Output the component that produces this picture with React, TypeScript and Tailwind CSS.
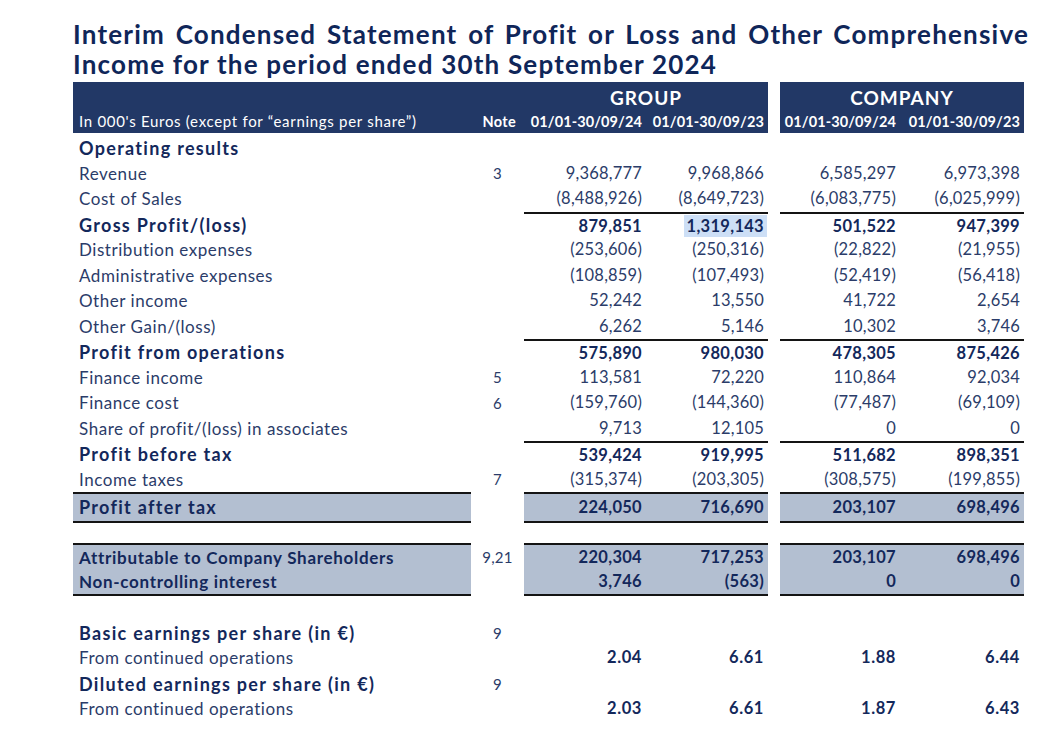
import React from "react";

type Row = {
  label?: string;
  note?: string;
  values?: string[];
  bold?: boolean;
  big?: boolean;
  lineTop?: boolean;
  shaded?: "box" | "top" | "bottom";
  numBold?: boolean;
  highlight?: number;
  spacer?: boolean;
};

const rows: Row[] = [
  { label: "Operating results", bold: true, big: true },
  { label: "Revenue", note: "3", values: ["9,368,777", "9,968,866", "6,585,297", "6,973,398"] },
  { label: "Cost of Sales", values: ["(8,488,926)", "(8,649,723)", "(6,083,775)", "(6,025,999)"] },
  { label: "Gross Profit/(loss)", bold: true, big: true, lineTop: true, numBold: true, highlight: 1, values: ["879,851", "1,319,143", "501,522", "947,399"] },
  { label: "Distribution expenses", values: ["(253,606)", "(250,316)", "(22,822)", "(21,955)"] },
  { label: "Administrative expenses", values: ["(108,859)", "(107,493)", "(52,419)", "(56,418)"] },
  { label: "Other income", values: ["52,242", "13,550", "41,722", "2,654"] },
  { label: "Other Gain/(loss)", values: ["6,262", "5,146", "10,302", "3,746"] },
  { label: "Profit from operations", bold: true, big: true, lineTop: true, numBold: true, values: ["575,890", "980,030", "478,305", "875,426"] },
  { label: "Finance income", note: "5", values: ["113,581", "72,220", "110,864", "92,034"] },
  { label: "Finance cost", note: "6", values: ["(159,760)", "(144,360)", "(77,487)", "(69,109)"] },
  { label: "Share of profit/(loss) in associates", values: ["9,713", "12,105", "0", "0"] },
  { label: "Profit before tax", bold: true, big: true, lineTop: true, numBold: true, values: ["539,424", "919,995", "511,682", "898,351"] },
  { label: "Income taxes", note: "7", values: ["(315,374)", "(203,305)", "(308,575)", "(199,855)"] },
  { label: "Profit after tax", bold: true, big: true, shaded: "box", numBold: true, values: ["224,050", "716,690", "203,107", "698,496"] },
  { spacer: true },
  { label: "Attributable to Company Shareholders", note: "9,21", bold: true, shaded: "top", numBold: true, values: ["220,304", "717,253", "203,107", "698,496"] },
  { label: "Non-controlling interest", bold: true, shaded: "bottom", numBold: true, values: ["3,746", "(563)", "0", "0"] },
  { spacer: true },
  { label: "Basic earnings per share (in €)", note: "9", bold: true, big: true },
  { label: "From continued operations", numBold: true, values: ["2.04", "6.61", "1.88", "6.44"] },
  { label: "Diluted earnings per share (in €)", note: "9", bold: true, big: true },
  { label: "From continued operations", numBold: true, values: ["2.03", "6.61", "1.87", "6.43"] },
];

const grid = "grid grid-cols-[398px_53px_122px_122px_12px_120px_124px]";

function StatementRow({ row }: { row: Row }) {
  if (row.spacer) return <div className="h-[25.5px]" />;

  // shaded blocks carry their own rules on the label and number cells
  const shade =
    row.shaded === "box"
      ? "bg-[#b3bfd1] border-y-2 border-[#141414]"
      : row.shaded === "top"
      ? "bg-[#b3bfd1] border-t-2 border-[#141414]"
      : row.shaded === "bottom"
      ? "bg-[#b3bfd1] border-b-2 border-[#141414]"
      : "";
  const numRule = row.lineTop ? "border-t-2 border-[#141414]" : "";
  const labelCls = row.bold
    ? `font-bold text-[#13285b] ${row.big ? "text-[18px] tracking-[1.3px]" : "text-[17px] tracking-[0.7px]"}`
    : "text-[17px] tracking-[0.55px] text-[#2b3c69]";
  const numCls = row.numBold
    ? `font-bold text-[#13285b] ${
        row.values && row.values[0].includes(".") ? "text-[16.5px] tracking-[0.6px]" : "text-[16.5px] tracking-[0.3px]"
      }`
    : "text-[16.5px] tracking-[0.2px] text-[#2b3c69]";

  const cell = (i: number) => {
    const v = row.values ? row.values[i] : "";
    return (
      <div className={`flex items-center justify-end pr-1 ${numCls} ${numRule} ${shade}`}>
        {row.highlight === i ? (
          <span className="bg-[#cddff6] px-[3px] -mr-[3px] leading-[22px]">{v}</span>
        ) : (
          v
        )}
      </div>
    );
  };

  return (
    <div className={`${grid} h-[25.5px]`}>
      <div className={`flex items-center pl-[6px] whitespace-nowrap ${labelCls} ${shade}`}>{row.label}</div>
      <div className="flex items-center justify-center text-[15px] tracking-[0.3px] text-[#2b3c69]">{row.note}</div>
      {cell(0)}
      {cell(1)}
      <div />
      {cell(2)}
      {cell(3)}
    </div>
  );
}

export default function App() {
  return (
    <div className="w-[1049px] h-[746px] bg-white overflow-hidden font-['Lato',sans-serif]">
      <div className="ml-[73px] w-[956px] pt-[19px] text-[26px] font-bold leading-[30px] tracking-[1.2px] text-[#0f2659]">
        <div className="text-justify [text-align-last:justify]">
          Interim Condensed Statement of Profit or Loss and Other Comprehensive
        </div>
        <div>Income for the period ended 30th September 2024</div>
      </div>

      <div className="ml-[73px] mt-[3px]">
        {/* header band */}
        <div className={`${grid} h-[28px] text-white font-bold`}>
          <div className="col-span-2 bg-[#223866]" />
          <div className="col-span-2 bg-[#223866] flex items-end justify-center text-[19px] leading-none pb-[3px] tracking-[1px]">
            GROUP
          </div>
          <div />
          <div className="col-span-2 bg-[#223866] flex items-end justify-center text-[19px] leading-none pb-[3px] tracking-[1px]">
            COMPANY
          </div>
        </div>
        <div className={`${grid} h-[23px] text-white`}>
          <div className="bg-[#223866] flex items-center pl-[6px] text-[15px] tracking-[0.7px] whitespace-nowrap">
            In 000's Euros (except for “earnings per share”)
          </div>
          <div className="bg-[#223866] flex items-center justify-end pr-[8px] text-[14.5px] font-bold tracking-[0.3px]">Note</div>
          <div className="bg-[#223866] flex items-center justify-end pr-1 text-[14.5px] font-bold tracking-[0.1px]">01/01-30/09/24</div>
          <div className="bg-[#223866] flex items-center justify-end pr-1 text-[14.5px] font-bold tracking-[0.1px]">01/01-30/09/23</div>
          <div />
          <div className="bg-[#223866] flex items-center justify-end pr-1 text-[14.5px] font-bold tracking-[0.1px]">01/01-30/09/24</div>
          <div className="bg-[#223866] flex items-center justify-end pr-1 text-[14.5px] font-bold tracking-[0.1px]">01/01-30/09/23</div>
        </div>

        <div className="mt-[2px]">
          {rows.map((r, i) => (
            <StatementRow key={i} row={r} />
          ))}
        </div>
      </div>
    </div>
  );
}
